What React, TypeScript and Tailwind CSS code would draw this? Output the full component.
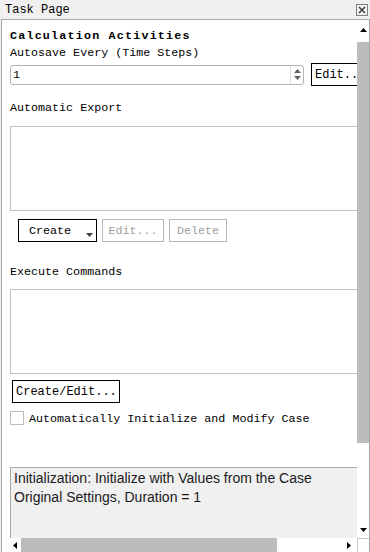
import React from "react";

const mono = { fontFamily: '"Liberation Mono", "DejaVu Sans Mono", monospace' };

function Tri({ dir, className = "" }: { dir: "up" | "down" | "left" | "right"; className?: string }) {
  const pts: Record<string, string> = {
    up: "0,4 7,4 3.5,0",
    down: "0,0 7,0 3.5,4",
    left: "4,0 4,7 0,3.5",
    right: "0,0 0,7 4,3.5",
  };
  const w = dir === "up" || dir === "down" ? 7 : 4;
  const h = dir === "up" || dir === "down" ? 4 : 7;
  return (
    <svg width={w} height={h} viewBox={`0 0 ${w} ${h}`} className={className}>
      <polygon points={pts[dir]} fill="#000" />
    </svg>
  );
}

export default function App() {
  return (
    <div
      className="w-[370px] h-[552px] bg-[#f0f0f0] flex flex-col overflow-hidden text-black"
      style={mono}
    >
      {/* title bar */}
      <div className="h-[19px] flex items-center justify-between pl-[5px] pr-[2px] shrink-0">
        <span className="text-[12px] leading-[14px]">Task Page</span>
        <svg width="12" height="12" viewBox="0 0 12 12">
          <rect x="0.5" y="0.5" width="11" height="11" fill="#f4f4f4" stroke="#808080" />
          <path d="M3 3 L9 9 M9 3 L3 9" stroke="#404040" strokeWidth="1.6" />
        </svg>
      </div>

      {/* panel */}
      <div className="flex-1 flex flex-col min-h-0 ml-[1px] border-l border-t border-r border-[#a8a8a8] bg-white">
        <div className="flex-1 flex min-h-0">
          <div className="flex-1 overflow-hidden bg-white min-w-0">
            <div className="pl-[8px] pt-[7px] w-[420px] text-[11.7px]">
              <div className="h-[16px] leading-[18px] font-bold tracking-[1.2px]">Calculation Activities</div>
              <div className="mt-[1px] h-[16px] leading-[19px]">Autosave Every (Time Steps)</div>
              <div className="mt-[3px] flex items-center h-[23px]">
                <div className="w-[294px] h-[20px] border border-[#b4b4b4] rounded-[3px] flex items-center justify-between bg-white">
                  <span className="pl-[2px] leading-[16px]">1</span>
                  <div className="w-[13px] h-full flex flex-col items-center justify-center gap-[3px] border-l border-[#e0e0e0]">
                    <svg width="7" height="4" viewBox="0 0 7 4"><polygon points="0,4 7,4 3.5,0" fill="#606060" /></svg>
                    <svg width="7" height="4" viewBox="0 0 7 4"><polygon points="0,0 7,0 3.5,4" fill="#606060" /></svg>
                  </div>
                </div>
                <div className="ml-[7px] h-[23px] w-[56px] border border-black flex items-center pl-[3px] shrink-0 bg-white">
                  <span className="text-[12px] leading-[16px]">Edit...</span>
                </div>
              </div>
              <div className="mt-[13px] h-[16px] leading-[18px]">Automatic Export</div>
              <div className="mt-[11px] h-[85px] w-[380px] border border-[#c0c0c0] bg-white" />
              <div className="mt-[8px] h-[23px] flex ml-[8px] gap-[5px]">
                <div className="relative w-[79px] h-[23px] border border-black flex items-center pl-[10px] bg-white">
                  <span className="leading-[16px]">Create</span>
                  <svg width="7" height="4" viewBox="0 0 7 4" className="absolute right-[3px] bottom-[4px]">
                    <polygon points="0,0 7,0 3.5,4" fill="#404040" />
                  </svg>
                </div>
                <div className="w-[62px] h-[23px] border border-[#b8b8b8] flex items-center justify-center text-[#a0a0a0]">
                  <span className="leading-[16px]">Edit...</span>
                </div>
                <div className="w-[58px] h-[23px] border border-[#b8b8b8] flex items-center justify-center text-[#a0a0a0]">
                  <span className="leading-[16px]">Delete</span>
                </div>
              </div>
              <div className="mt-[21px] h-[16px] leading-[18px]">Execute Commands</div>
              <div className="mt-[10px] h-[85px] w-[380px] border border-[#c0c0c0] bg-white" />
              <div className="mt-[6px] ml-[2px] w-[108px] h-[23px] border border-black flex items-center pl-[3px] bg-white">
                <span className="text-[12px] leading-[16px]">Create/Edit...</span>
              </div>
              <div className="mt-[8px] flex items-center h-[14px]">
                <div className="w-[14px] h-[14px] border border-[#bcbcbc] bg-white shrink-0" />
                <span className="ml-[5px] leading-[16px] pt-[2px]">Automatically Initialize and Modify Case</span>
              </div>
              <div className="mt-[42px] h-[100px] w-[380px] bg-[#f0f0f0] border-t border-l border-[#a8a8a8] pl-[3px] pt-[1px]">
                <div
                  className="text-[14px] leading-[19px] text-[#1a1a1a]"
                  style={{ fontFamily: '"Liberation Sans", "Noto Sans", sans-serif' }}
                >
                  Initialization: Initialize with Values from the Case
                  <br />
                  Original Settings, Duration = 1
                </div>
              </div>
            </div>
          </div>
          {/* vertical scrollbar */}
          <div className="w-[12px] shrink-0 flex flex-col bg-white">
            <div className="h-[16px] flex items-center justify-center pt-[4px]">
              <Tri dir="up" />
            </div>
            <div className="mt-[6px] h-[401px] bg-[#bcbcbc]" />
            <div className="flex-1" />
            <div className="h-[16px] flex items-center justify-center">
              <Tri dir="down" />
            </div>
          </div>
        </div>
        {/* horizontal scrollbar */}
        <div className="h-[14px] flex shrink-0 bg-white">
          <div className="flex-1 flex items-center">
            <div className="w-[19px] flex items-center justify-center pl-[6px]">
              <Tri dir="left" />
            </div>
            <div className="h-[14px] w-[256px] bg-[#bcbcbc]" />
            <div className="flex-1" />
            <div className="w-[16px] flex items-center justify-center">
              <Tri dir="right" />
            </div>
          </div>
          <div className="w-[12px] border-l border-t border-[#c8c8c8] bg-white" />
        </div>
      </div>
    </div>
  );
}
